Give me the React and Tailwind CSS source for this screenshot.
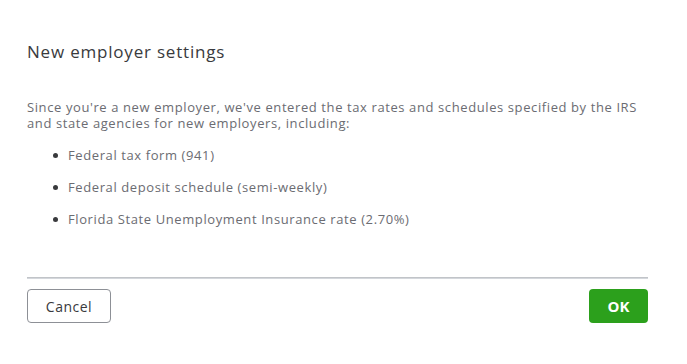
export default function App() {
  const items = [
    "Federal tax form (941)",
    "Federal deposit schedule (semi-weekly)",
    "Florida State Unemployment Insurance rate (2.70%)",
  ];
  return (
    <div className="w-[687px] h-[364px] bg-white overflow-hidden" style={{ fontFamily: "'Open Sans', Lato, sans-serif" }}>
      <div className="pl-[27px] pr-[39px] pt-[40px]">
        <h1 className="text-[17px] leading-[24px] text-[#393a3d] font-normal tracking-[0.8px]">New employer settings</h1>
        <p className="mt-[35px] text-[13px] leading-[16px] text-[#6b6c72] tracking-[0.6px]">
          Since you're a new employer, we've entered the tax rates and schedules specified by the IRS
          <br />
          and state agencies for new employers, including:
        </p>
        <ul className="mt-[16px] flex flex-col gap-[16px] pl-[26px] text-[13px] leading-[16px] text-[#6b6c72] tracking-[0.6px]">
          {items.map((t) => (
            <li key={t} className="flex items-center gap-[10px]">
              <span className="w-[5px] h-[5px] rounded-full bg-[#393a3d]" />
              <span>{t}</span>
            </li>
          ))}
        </ul>
        <div className="mt-[50px] h-[2px] bg-[#d4d7dc] border-t border-[#c1c4c8]" />
        <div className="mt-[10px] flex justify-between">
          <button className="w-[84px] h-[34px] rounded-[4px] border border-[#8d9096] text-[14px] tracking-[0.5px] text-[#393a3d] bg-white">Cancel</button>
          <button className="w-[59px] h-[34px] rounded-[4px] bg-[#2ca01c] text-[15px] font-bold text-white">OK</button>
        </div>
      </div>
    </div>
  );
}
